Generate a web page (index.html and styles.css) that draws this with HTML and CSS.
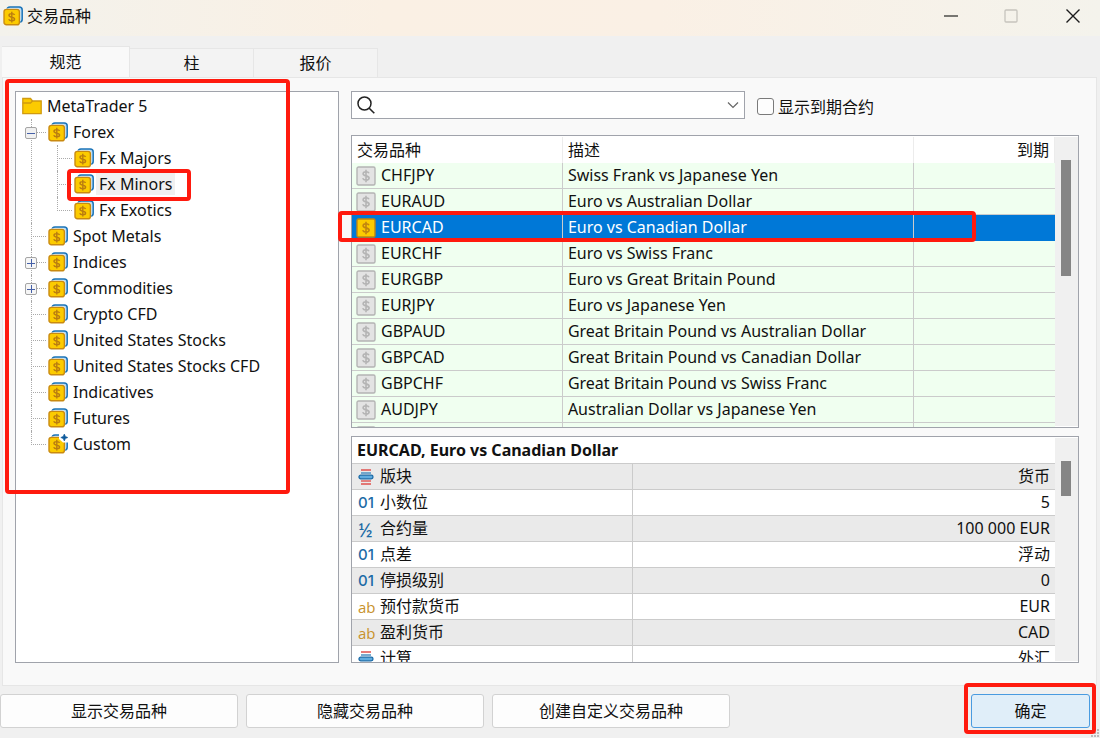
FILE: index.html
```html
<!DOCTYPE html>
<html lang="zh-CN">
<head>
<meta charset="utf-8">
<title>交易品种</title>
<link rel="stylesheet" href="styles.css">
</head>
<body>
<svg class="sprite" aria-hidden="true">
  <symbol id="coin" viewBox="0 0 20 20">
    <rect x="4" y="1" width="15.2" height="15.2" rx="3" fill="#b9dcf5" stroke="#1c74b8" stroke-width="1.5"/>
    <rect x="0.2" y="2.6" width="17" height="17" rx="3" fill="#fff"/>
    <rect x="1" y="3.4" width="15.4" height="15.4" rx="2.4" fill="#fccb00" stroke="#c98a10" stroke-width="1.4"/>
    <path d="M11.6 8.9C11.2 8 10 7.6 8.7 7.6 7.2 7.6 6 8.200 6 9.300c0 2.700 5.600 1.100 5.600 3.700 0 1.100-1.300 1.800-2.800 1.800-1.500 0-2.700-.6-3.100-1.600M8.800 5.800v10.600" fill="none" stroke="#b97c10" stroke-width="1.4"/>
  </symbol>
  <symbol id="coin-custom" viewBox="0 0 20 20">
    <use href="#coin"/>
    <path d="M11 0h9v8.500h-5L11 5z" fill="#fff"/>
    <path d="M16.300 0l1.100 2.400 2.400 1.100-2.400 1.100-1.100 2.400-1.100-2.400-2.400-1.100 2.400-1.100z" fill="#0d5a9c" stroke="#0d5a9c" stroke-width=".6"/>
  </symbol>
  <symbol id="folder" viewBox="0 0 20 18">
    <path d="M.8 1.500h7.700l2 2.500h8.700v12.700H.8z" fill="#fccb00" stroke="#d09a10" stroke-width="1.300"/>
    <path d="M.8 6h7.700l2-2" fill="none" stroke="#d09a10" stroke-width="1.300"/>
  </symbol>
  <symbol id="tile" viewBox="0 0 20 20">
    <rect x="1" y="1" width="18" height="18" rx="1.500" fill="currentColor" stroke="var(--edge)" stroke-width="1.400"/>
    <path d="M13 7.300C12.600 6.300 11.400 5.800 10 5.800 8.300 5.800 7.100 6.500 7.100 7.700c0 2.900 6 1.500 6 4.400 0 1.300-1.400 2-3 2-1.700 0-3-.7-3.400-1.800M10 3.800v12.400" fill="none" stroke="var(--edge)" stroke-width="1.600"/>
  </symbol>
  <symbol id="stack" viewBox="0 0 16 16">
    <path d="M3 1h10M3 15h10" stroke="#e0524f" stroke-width="1.500"/>
    <path d="M3 4h10" stroke="#4d8fc0" stroke-width="1.500"/>
    <path d="M3 12h10" stroke="#e05f5c" stroke-width="1.500"/>
    <rect x="1" y="6.200" width="14" height="3.600" rx="1.800" fill="#60acdf" stroke="#1b6ba8" stroke-width="1.300"/>
  </symbol>
</svg>

<header class="titlebar">
  <svg class="icon"><use href="#coin"/></svg>
  <h1 class="title">交易品种</h1>
  <button class="win" aria-label="最小化"><svg viewBox="0 0 14 14"><path d="M0 7h14" stroke="#4c4c48" stroke-width="1.500"/></svg></button>
  <button class="win" aria-label="最大化" disabled><svg viewBox="0 0 14 14"><rect x="1" y="1" width="12" height="12" rx="1" fill="none" stroke="#c6c4bd" stroke-width="1.300"/></svg></button>
  <button class="win" aria-label="关闭"><svg viewBox="0 0 14 14"><path d="M.5.5l13 13M13.500.5l-13 13" stroke="#1c1c1c" stroke-width="1.400"/></svg></button>
</header>

<nav class="tabs" role="tablist">
  <button class="tab active" role="tab" aria-selected="true">规范</button>
  <button class="tab" role="tab" aria-selected="false">柱</button>
  <button class="tab" role="tab" aria-selected="false">报价</button>
</nav>

<main class="panel">
  <section class="tree-pane pane">
    <div class="mark mark-tree"></div>
    <div class="row"><svg class="icon"><use href="#folder"/></svg><span>MetaTrader 5</span></div>
    <ul class="tree">
      <li>
        <button class="toggle open" aria-label="折叠"></button>
        <div class="row"><svg class="icon"><use href="#coin"/></svg><span>Forex</span></div>
        <ul class="tree">
          <li><div class="row"><svg class="icon"><use href="#coin"/></svg><span>Fx Majors</span></div></li>
          <li><div class="row current"><svg class="icon"><use href="#coin"/></svg><span>Fx Minors</span></div><div class="mark mark-node"></div></li>
          <li><div class="row"><svg class="icon"><use href="#coin"/></svg><span>Fx Exotics</span></div></li>
        </ul>
      </li>
      <li><div class="row"><svg class="icon"><use href="#coin"/></svg><span>Spot Metals</span></div></li>
      <li><button class="toggle" aria-label="展开"></button><div class="row"><svg class="icon"><use href="#coin"/></svg><span>Indices</span></div></li>
      <li><button class="toggle" aria-label="展开"></button><div class="row"><svg class="icon"><use href="#coin"/></svg><span>Commodities</span></div></li>
      <li><div class="row"><svg class="icon"><use href="#coin"/></svg><span>Crypto CFD</span></div></li>
      <li><div class="row"><svg class="icon"><use href="#coin"/></svg><span>United States Stocks</span></div></li>
      <li><div class="row"><svg class="icon"><use href="#coin"/></svg><span>United States Stocks CFD</span></div></li>
      <li><div class="row"><svg class="icon"><use href="#coin"/></svg><span>Indicatives</span></div></li>
      <li><div class="row"><svg class="icon"><use href="#coin"/></svg><span>Futures</span></div></li>
      <li><div class="row"><svg class="icon"><use href="#coin-custom"/></svg><span>Custom</span></div></li>
    </ul>
  </section>

  <div class="content">
    <div class="filters">
      <div class="search">
        <svg class="lens" viewBox="0 0 18 18"><circle cx="7.500" cy="7.500" r="6.500" fill="none" stroke="#222" stroke-width="1.500"/><path d="M12 12l5.300 5.300" stroke="#222" stroke-width="1.600"/></svg>
        <input type="text" aria-label="搜索交易品种">
        <button class="drop" aria-label="展开列表"><svg viewBox="0 0 12 8"><path d="M1 1.500l5 5 5-5" fill="none" stroke="#666" stroke-width="1.200"/></svg></button>
      </div>
      <label class="check"><input type="checkbox">显示到期合约</label>
    </div>

    <section class="symbols">
      <div class="mark mark-symbol"></div>
      <div class="pane scroller">
        <table class="grid symbols-table">
          <colgroup><col class="c-name"><col class="c-desc"><col></colgroup>
          <thead><tr><th>交易品种</th><th>描述</th><th>到期</th></tr></thead>
          <tbody>
            <tr><td><div class="cell"><svg class="icon"><use href="#tile"/></svg>CHFJPY</div></td><td>Swiss Frank vs Japanese Yen</td><td></td></tr>
            <tr><td><div class="cell"><svg class="icon"><use href="#tile"/></svg>EURAUD</div></td><td>Euro vs Australian Dollar</td><td></td></tr>
            <tr class="selected"><td><div class="cell"><svg class="icon"><use href="#tile"/></svg>EURCAD</div></td><td>Euro vs Canadian Dollar</td><td></td></tr>
            <tr><td><div class="cell"><svg class="icon"><use href="#tile"/></svg>EURCHF</div></td><td>Euro vs Swiss Franc</td><td></td></tr>
            <tr><td><div class="cell"><svg class="icon"><use href="#tile"/></svg>EURGBP</div></td><td>Euro vs Great Britain Pound</td><td></td></tr>
            <tr><td><div class="cell"><svg class="icon"><use href="#tile"/></svg>EURJPY</div></td><td>Euro vs Japanese Yen</td><td></td></tr>
            <tr><td><div class="cell"><svg class="icon"><use href="#tile"/></svg>GBPAUD</div></td><td>Great Britain Pound vs Australian Dollar</td><td></td></tr>
            <tr><td><div class="cell"><svg class="icon"><use href="#tile"/></svg>GBPCAD</div></td><td>Great Britain Pound vs Canadian Dollar</td><td></td></tr>
            <tr><td><div class="cell"><svg class="icon"><use href="#tile"/></svg>GBPCHF</div></td><td>Great Britain Pound vs Swiss Franc</td><td></td></tr>
            <tr><td><div class="cell"><svg class="icon"><use href="#tile"/></svg>AUDJPY</div></td><td>Australian Dollar vs Japanese Yen</td><td></td></tr>
            <tr><td><div class="cell"><svg class="icon"><use href="#tile"/></svg></div></td><td></td><td></td></tr>
          </tbody>
        </table>
        <div class="track"><div class="thumb"></div></div>
      </div>
    </section>

    <section class="details">
      <div class="pane scroller">
        <table class="grid details-table">
          <caption>EURCAD, Euro vs Canadian Dollar</caption>
          <colgroup><col class="c-key"><col></colgroup>
          <tbody>
            <tr><td><div class="cell"><span class="kind"><svg class="small"><use href="#stack"/></svg></span>版块</div></td><td>货币</td></tr>
            <tr><td><div class="cell"><span class="kind num">01</span>小数位</div></td><td>5</td></tr>
            <tr><td><div class="cell"><span class="kind half">½</span>合约量</div></td><td>100 000 EUR</td></tr>
            <tr><td><div class="cell"><span class="kind num">01</span>点差</div></td><td>浮动</td></tr>
            <tr><td><div class="cell"><span class="kind num">01</span>停损级别</div></td><td>0</td></tr>
            <tr><td><div class="cell"><span class="kind text">ab</span>预付款货币</div></td><td>EUR</td></tr>
            <tr><td><div class="cell"><span class="kind text">ab</span>盈利货币</div></td><td>CAD</td></tr>
            <tr><td><div class="cell"><span class="kind"><svg class="small"><use href="#stack"/></svg></span>计算</div></td><td>外汇</td></tr>
          </tbody>
        </table>
        <div class="track"><div class="thumb short"></div></div>
      </div>
    </section>
  </div>
</main>

<footer class="actions">
  <button class="btn">显示交易品种</button>
  <button class="btn">隐藏交易品种</button>
  <button class="btn">创建自定义交易品种</button>
  <div class="confirm">
    <button class="btn primary">确定</button>
    <div class="mark mark-ok"></div>
  </div>
  <svg class="grip" viewBox="0 0 9 9"><path d="M6 0h2v2H6zM3 3h2v2H3zM6 3h2v2H6zM0 6h2v2H0zM3 6h2v2H3zM6 6h2v2H6z" fill="#bbb"/></svg>
</footer>
</body>
</html>
```
FILE: styles.css
```css
* { box-sizing: border-box; }

body {
  margin: 0;
  height: 100vh;
  display: flex;
  flex-direction: column;
  background: #f0f0f0;
  color: #111;
  font: 16px/26px "Noto Sans", "Noto Sans CJK SC", sans-serif;
}

button, input { font: inherit; color: inherit; }
button { padding: 0; border: 0; background: none; }

.sprite { position: absolute; width: 0; height: 0; }
.icon { width: 20px; height: 20px; flex: none; }
.small { display: block; width: 16px; height: 16px; }

/* Title bar */
.titlebar {
  display: flex;
  align-items: center;
  height: 36px;
  flex: none;
  padding: 0 3px 4px;
  background: linear-gradient(90deg, #f3f2ec, #faf0e4 35%, #faf0e5 60%, #f4f3ec);
}
.title { flex: 1; margin: 0 0 0 4px; font-size: 16px; font-weight: 400; }
.win { width: 60px; height: 32px; display: grid; place-items: center; }
.win:last-child { width: 48px; margin-left: 8px; }
.win svg { width: 14px; height: 14px; }

/* Tabs */
.tabs { display: flex; align-items: flex-end; flex: none; height: 41px; padding-left: 2px; }
.tab {
  width: 124px;
  height: 29px;
  background: #f3f3f3;
  border: 1px solid #e6e6e6;
  border-width: 1px 1px 0 0;
}
.tab.active { width: 128px; height: 31px; background: #f9f9f9; }

/* Main panel */
.panel {
  flex: 1;
  min-height: 0;
  display: flex;
  gap: 12px;
  margin: 0 3px 0 2px;
  padding: 13px 17px 22px 12px;
  background: #f9f9f9;
  border: 1px solid #e6e6e6;
}
.pane { background: #fff; border: 1px solid #a0a3ab; }

/* Symbol tree */
.tree-pane { position: relative; width: 324px; flex: none; padding: 1px 0 0 6px; }
.tree { margin: 0; padding: 0 0 0 26px; list-style: none; }
.tree li { position: relative; }
.tree li::before, .tree li::after { content: ""; position: absolute; left: -17px; }
.tree li::before { top: 0; height: 100%; border-left: 1px dotted #aaa; }
.tree li:last-child::before { height: 14px; }
.tree li::after { top: 13px; width: 15px; border-top: 1px dotted #aaa; }
.row { display: flex; align-items: center; gap: 2px; height: 26px; white-space: nowrap; }
.row span { padding: 0 3px; line-height: 22px; }
.row.current span { background: #f0f0f0; }
.toggle {
  position: absolute;
  z-index: 1;
  left: -23px;
  top: 8px;
  width: 12px;
  height: 12px;
  border: 1px solid #a5a5a5;
  border-radius: 2px;
  background:
    linear-gradient(#4560a8, #4560a8) center / 8px 1px no-repeat,
    linear-gradient(#4560a8, #4560a8) center / 1px 8px no-repeat,
    #f6f6f6;
}
.toggle.open { background: linear-gradient(#4560a8, #4560a8) center / 8px 1px no-repeat, #f0f0f0; }

/* Right side */
.content { flex: 1; min-width: 0; display: flex; flex-direction: column; }
.filters { display: flex; align-items: center; gap: 12px; flex: none; height: 28px; margin-bottom: 16px; }
.search {
  display: flex;
  align-items: center;
  flex: 0 1 394px;
  height: 28px;
  padding: 0 5px;
  background: #fff;
  border: 1px solid #a0a3ab;
}
.lens { width: 18px; height: 18px; flex: none; }
.search input { flex: 1; min-width: 0; border: 0; outline: 0; background: none; }
.drop { width: 12px; display: grid; }
.check { display: flex; align-items: center; gap: 4px; padding-top: 3px; white-space: nowrap; }
.check input {
  appearance: none;
  width: 17px;
  height: 17px;
  margin: 0;
  background: #fdfdfd;
  border: 1px solid #7a7a7a;
  border-radius: 3px;
}

/* Scrolling tables */
.symbols { position: relative; flex: 293 1 0; min-height: 0; margin-bottom: 8px; }
.details { flex: 227 1 0; min-height: 0; }
.scroller { display: flex; align-items: flex-start; height: 100%; padding: 1px 0 1px; overflow: hidden; }
.track { width: 23px; height: 100%; flex: none; padding: 23px 7px 0 6px; background: #f0f0f0; }
.thumb { height: 116px; background: #858585; }
.thumb.short { height: 35px; }

.grid { flex: 1; min-width: 0; table-layout: fixed; border-collapse: separate; border-spacing: 0; }
.grid th, .grid td { height: 26px; padding: 0 5px; line-height: 25px; text-align: left; font-weight: 400; white-space: nowrap; }
.grid th:last-child, .grid td:last-child { text-align: right; }
.grid td { border-bottom: 1px solid #cbcbcb; }
.grid td:not(:last-child) { border-right: 1px solid #cbcbcb; }
.grid th { border-right: 1px solid #ececec; }
.cell { display: flex; align-items: center; gap: 5px; height: 25px; }

.c-name { width: 30%; }
.c-desc { width: 50%; }
.c-key { width: 40%; }
.symbols-table .cell { margin-left: -1px; }
.symbols-table td { background: #f0fff0; }
.symbols-table .icon { color: #e3e3e3; --edge: #b4b4b4; }
.symbols-table .selected td { background: #0078d7; color: #fff; border-bottom-color: #0078d7; }
.symbols-table .selected .icon { color: #fccb00; --edge: #c08410; }

.details-table caption {
  height: 26px;
  padding-left: 5px;
  border-bottom: 1px solid #cbcbcb;
  line-height: 25px;
  text-align: left;
  font-weight: 700;
  white-space: nowrap;
}
.details-table tr:nth-child(odd) td { background: #eaeaea; }
.details-table .cell { padding-left: 1px; }
.kind { width: 17px; flex: none; color: #1c6ba6; line-height: 22px; }
.num { font: 500 15px/22px Inter, sans-serif; }
.half { font: 500 20px/22px Lato, sans-serif; }
.text { color: #c8922c; font: 15px/22px "Open Sans", sans-serif; }

/* Footer */
.actions { position: relative; display: flex; gap: 8px; flex: none; padding: 8px 10px 10px 0; }
.btn {
  width: 238px;
  height: 34px;
  background: #fdfdfd;
  border: 1px solid #d2d2d2;
  border-radius: 3px;
  white-space: nowrap;
}
.confirm { position: relative; margin-left: auto; }
.btn.primary { width: 119px; background: #e0eef9; border-color: #4a9be0; }
.grip { position: absolute; right: 0; bottom: 0; width: 9px; height: 9px; }

/* Red highlight frames */
.mark { position: absolute; z-index: 2; border: 4px solid #ff1a0e; border-radius: 4px; pointer-events: none; }
.mark-tree { left: -11px; top: -13px; width: 285px; height: 415px; }
.mark-node { left: -7px; top: -2px; width: 124px; height: 32px; }
.mark-symbol { left: -13px; top: 76px; width: 638px; height: 31px; }
.mark-ok { inset: -11px -6px -6px -7px; }
```
